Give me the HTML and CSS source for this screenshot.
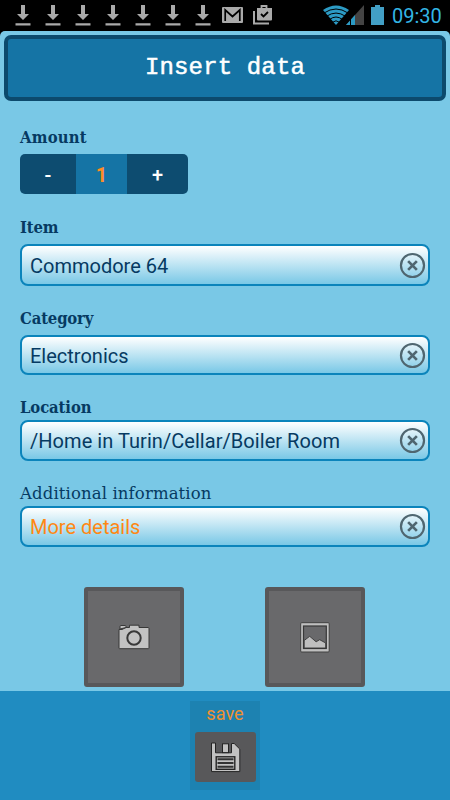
FILE: index.html
```html
<!DOCTYPE html>
<html lang="en">
<head>
<meta charset="utf-8">
<title>Insert data</title>
<link rel="stylesheet" href="styles.css">
</head>
<body>
<svg width="0" height="0" class="defs">
  <symbol id="download" viewBox="0 0 16 22"><path d="M6 0h4v9h4l-6 6-6-6h4zM.5 18.3h15v2.3H.5z"/></symbol>
  <symbol id="clear" viewBox="0 0 26 26"><circle cx="13" cy="13" r="11.1" stroke-width="2.1"/><path d="M8.8 8.8l8.4 8.4M17.2 8.8l-8.4 8.4" stroke-width="2.6"/></symbol>
</svg>
<div class="status">
  <div class="downloads">
    <svg><use href="#download"/></svg><svg><use href="#download"/></svg><svg><use href="#download"/></svg><svg><use href="#download"/></svg><svg><use href="#download"/></svg><svg><use href="#download"/></svg><svg><use href="#download"/></svg>
  </div>
  <svg class="mail" viewBox="0 0 21 16"><rect width="21" height="16" rx="1" fill="#aaa"/><path d="M3.2 14V3l7.3 6.5L17.8 3v11" fill="none" stroke="#000" stroke-width="1.7"/></svg>
  <svg class="bag" viewBox="0 0 20 20"><path d="M1 6v12.5h15" fill="none" stroke="#aaa" stroke-width="2"/><path d="M4 3h15v11.5q0 1-1 1H5q-1 0-1-1z" fill="#aaa"/><path d="M8.5 4V1h5v3" fill="none" stroke="#aaa" stroke-width="1.8"/><path d="M8 9l2.5 2.5L15 7" fill="none" stroke="#000" stroke-width="1.8"/></svg>
  <svg class="wifi" viewBox="0 0 26 20"><path d="M0 5Q13-4 26 5L13 20z" fill="#2c9bc5"/><path d="M1 8q12-8 24 0M3.5 11.3q9.5-6.5 19 0M6.5 14.5q6.5-5 13 0M9.5 17.3q3.5-3 7 0" fill="none" stroke="#000" stroke-width="1"/></svg>
  <svg class="signal" viewBox="0 0 18 20"><path d="M18 0v20H0z" fill="#444"/><path d="M9 10v10H0z" fill="#2c9bc5"/><path d="M4.5 14v6" stroke="#000"/></svg>
  <svg class="battery" viewBox="0 0 13 20"><path d="M4 0h5v2h4v18H0V2h4z" fill="#429fc5"/></svg>
  <span class="clock">09:30</span>
</div>
<main class="page">
  <header class="title">Insert data</header>
  <form class="form">
    <label class="label amount-label">Amount</label>
    <div class="stepper"><span class="minus">-</span><span class="value">1</span><span class="plus">+</span></div>
    <label class="label item-label">Item</label>
    <div class="field tall"><span>Commodore 64</span><svg><use href="#clear"/></svg></div>
    <label class="label category-label">Category</label>
    <div class="field short"><span>Electronics</span><svg><use href="#clear"/></svg></div>
    <label class="label location-label">Location</label>
    <div class="field"><span class="location">/Home in Turin/Cellar/Boiler Room</span><svg><use href="#clear"/></svg></div>
    <label class="label info-label">Additional information</label>
    <div class="field"><span class="hint">More details</span><svg><use href="#clear"/></svg></div>
  </form>
  <div class="photos">
    <div class="photo"><svg width="32" height="26" viewBox="0 0 32 26"><path d="M1 5.5V24q0 .7.7.7h28.600q.7 0 .7-.7V4.500q0-1-1-1h-9V1.200H11.500v2.300H8L4 5.500z" fill="#c2c2c2" stroke="#383838"/><path d="M2 5V2.500q0-1 1-1h4q1 0 1 1v1z" fill="#c2c2c2" stroke="#383838"/><circle cx="16" cy="14" r="6.700" fill="#c2c2c2" stroke="#383838" stroke-width="2"/></svg></div>
    <div class="photo"><svg width="30" height="31" viewBox="0 0 30 31"><rect x=".7" y=".7" width="28.500" height="29.300" rx="1" fill="#bfbfbf" stroke="#404040"/><rect x="3.500" y="4" width="22.800" height="22.500" fill="#69696b" stroke="#383838" stroke-width="1.200"/><path d="M4.200 18.500l5.500-4.200 6.400 5.500 3.600-2.100 6 3.300V26H4.200z" fill="#bfbfbf" stroke="#383838" stroke-width=".9"/></svg></div>
  </div>
</main>
<footer class="footer">
  <div class="save"><span>save</span>
    <div class="save-button"><svg width="31" height="31" viewBox="0 0 31 31"><path d="M1.500 1h4v9.800h16V1.500h2.700l5.600 5.600v22.500H1.500z" fill="#c2c2c2" stroke="#242424"/><rect x="12.500" y="1.800" width="6" height="8.800" fill="#c2c2c2" stroke="#242424"/><rect x="6.200" y="14.800" width="18.600" height="12.500" fill="#c2c2c2" stroke="#242424" stroke-width="1.400"/><path d="M7.500 17.300h16M7.500 21h16M7.500 24.700h16" stroke="#333" stroke-width="1.900"/></svg></div>
  </div>
</footer>
</body>
</html>
```
FILE: styles.css
```css
* { box-sizing: border-box; }
body { margin: 0; width: 450px; height: 800px; overflow: hidden; background: #000; font-family: Roboto, sans-serif; color: #063a62; }
.defs { position: absolute; }
svg { display: block; flex: none; }
.status { height: 31px; display: flex; align-items: flex-start; padding-top: 5px; }
.downloads { display: flex; gap: 14px; margin-left: 15px; }
.downloads svg { width: 16px; height: 22px; fill: #aaa; }
.mail { width: 21px; height: 16px; margin: 2px 0 0 11px; }
.bag { width: 20px; height: 20px; margin-left: 10px; }
.wifi { width: 26px; height: 20px; margin-left: 50px; }
.signal { width: 18px; height: 20px; margin-left: -3px; }
.battery { width: 13px; height: 20px; margin-left: 7px; }
.clock { margin-left: 8px; font-size: 20px; line-height: 22px; color: #33b5e5; white-space: nowrap; }
.page { height: 660px; background: #79c8e6; border-radius: 5px 5px 0 0; padding-top: 4px; }
.title { height: 66px; margin: 0 4px; border: 4px solid #0c4a6d; border-radius: 7px; background: #1574a5; color: #fff; font: 24px/57px "Liberation Mono", monospace; letter-spacing: .15px; text-align: center; -webkit-text-stroke: .5px #fff; }
.form { display: flex; flex-direction: column; padding: 0 20px; }
.label { height: 20px; font: bold 16.5px/20px "DejaVu Serif Condensed", "DejaVu Serif", serif; white-space: nowrap; color: #063a62; }
.amount-label { margin-top: 27px; letter-spacing: .2px; }
.item-label { margin-top: 23px; line-height: 21px; letter-spacing: -.2px; }
.category-label { margin-top: 22px; line-height: 21px; letter-spacing: -.15px; }
.location-label { margin-top: 23px; letter-spacing: -.1px; }
.info-label { margin-top: 23px; font-weight: normal; font-family: "DejaVu Serif", serif; letter-spacing: .12px; }
.stepper { display: flex; width: 168px; height: 40px; margin-top: 6px; border-radius: 5px; overflow: hidden; background: #0d4c70; color: #fff; font: 500 20px/42px Roboto, sans-serif; text-align: center; }
.minus { width: 56px; }
.value { width: 51px; background: #1574a5; color: #ff8d25; font-weight: bold; }
.plus { width: 61px; }
.field { height: 41px; display: flex; align-items: center; justify-content: space-between; border: 2px solid #0b84bb; border-radius: 8px; padding: 0 2px 0 8px; background: linear-gradient(#fff, #79c8e6); font-size: 20px; line-height: 24px; white-space: nowrap; }
.field span { padding-top: 1px; }
.location { letter-spacing: .05px; }
.field svg { width: 27px; height: 27px; fill: none; stroke: #4f6670; }
.tall { height: 42px; margin-top: 7px; }
.short { height: 40px; margin-top: 7px; }
.location-label + .field, .info-label + .field { margin-top: 2px; }
.hint { color: #ff8814; }
.photos { display: flex; gap: 81px; margin: 40px 0 0 84.4px; }
.photo { width: 100px; height: 100px; border: 4px solid #58585a; border-radius: 3px; background: #69696b; display: flex; align-items: center; justify-content: center; }
.footer { height: 109px; background: #208cc1; display: flex; justify-content: center; padding-top: 10px; }
.save { width: 70px; height: 89px; background: #1d82b1; color: #ef9031; font-size: 18px; line-height: 26px; text-align: center; letter-spacing: .1px; }
.save span { display: block; }
.save-button { width: 61px; height: 50px; margin: 5px auto 0; border-radius: 3px; background: #58585a; display: flex; align-items: center; justify-content: center; }
```
